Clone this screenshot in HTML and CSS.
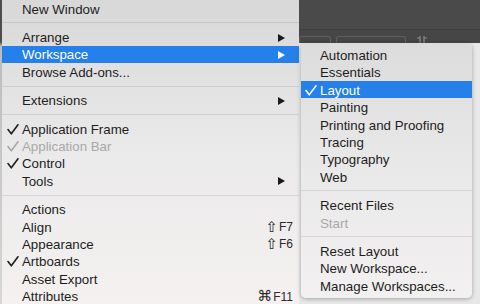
FILE: index.html
```html
<!DOCTYPE html>
<html lang="en">
<head>
    <meta charset="UTF-8">
    <title>Window Menu</title>
    <link rel="stylesheet" href="styles.css">
</head>
<body>
    <div class="screen">
        <div class="edge"></div>

        <!-- Window menu -->
        <div class="menu main">
            <div class="item"><span class="mark"></span><span>New Window</span></div>
            <div class="sep"></div>
            <div class="item"><span class="mark"></span><span>Arrange</span><span class="arrow"></span></div>
            <div class="item active"><span class="mark"></span><span>Workspace</span><span class="arrow"></span></div>
            <div class="item"><span class="mark"></span><span>Browse Add-ons...</span></div>
            <div class="sep"></div>
            <div class="item"><span class="mark"></span><span>Extensions</span><span class="arrow"></span></div>
            <div class="sep"></div>
            <div class="item"><span class="mark"><svg viewBox="0 0 12 11" width="12" height="11"><polyline points="1,5.6 4.3,9.8 11,0.8"/></svg></span><span>Application Frame</span></div>
            <div class="item disabled"><span class="mark"><svg viewBox="0 0 12 11" width="12" height="11"><polyline points="1,5.6 4.3,9.8 11,0.8"/></svg></span><span>Application Bar</span></div>
            <div class="item"><span class="mark"><svg viewBox="0 0 12 11" width="12" height="11"><polyline points="1,5.6 4.3,9.8 11,0.8"/></svg></span><span>Control</span></div>
            <div class="item"><span class="mark"></span><span>Tools</span><span class="arrow"></span></div>
            <div class="sep"></div>
            <div class="item"><span class="mark"></span><span>Actions</span></div>
            <div class="item"><span class="mark"></span><span>Align</span><span class="key"><span class="sym">⇧</span>F7</span></div>
            <div class="item"><span class="mark"></span><span>Appearance</span><span class="key"><span class="sym">⇧</span>F6</span></div>
            <div class="item"><span class="mark"><svg viewBox="0 0 12 11" width="12" height="11"><polyline points="1,5.6 4.3,9.8 11,0.8"/></svg></span><span>Artboards</span></div>
            <div class="item"><span class="mark"></span><span>Asset Export</span></div>
            <div class="item"><span class="mark"></span><span>Attributes</span><span class="key"><span class="sym">⌘</span>F11</span></div>
        </div>

        <div class="side">
            <div class="titlebar"></div>
            <div class="toolbar">
                <div class="field short"></div>
                <div class="field long"></div>
                <svg class="tool-icon" viewBox="0 0 12 9" width="12" height="9"><path d="M1 2h3V0M4 2v7M8 0v2h3M8 2v7"/></svg>
            </div>
            <div class="panel">
                <!-- Workspace submenu -->
                <div class="menu sub">
                    <div class="item"><span class="mark"></span><span>Automation</span></div>
                    <div class="item"><span class="mark"></span><span>Essentials</span></div>
                    <div class="item active"><span class="mark"><svg viewBox="0 0 12 11" width="12" height="11"><polyline points="1,5.6 4.3,9.8 11,0.8"/></svg></span><span>Layout</span></div>
                    <div class="item"><span class="mark"></span><span>Painting</span></div>
                    <div class="item"><span class="mark"></span><span>Printing and Proofing</span></div>
                    <div class="item"><span class="mark"></span><span>Tracing</span></div>
                    <div class="item"><span class="mark"></span><span>Typography</span></div>
                    <div class="item"><span class="mark"></span><span>Web</span></div>
                    <div class="sep"></div>
                    <div class="item"><span class="mark"></span><span>Recent Files</span></div>
                    <div class="item disabled"><span class="mark"></span><span>Start</span></div>
                    <div class="sep"></div>
                    <div class="item"><span class="mark"></span><span>Reset Layout</span></div>
                    <div class="item"><span class="mark"></span><span>New Workspace...</span></div>
                    <div class="item"><span class="mark"></span><span>Manage Workspaces...</span></div>
                </div>
            </div>
        </div>
    </div>
</body>
</html>
```

FILE: styles.css
```css
body {
    margin: 0;
    background-color: #e8e7e7;
    font-family: "Liberation Sans", Arial, sans-serif;
}
.screen {
    display: flex;
    width: 480px;
    height: 304px;
    overflow: hidden;
}
.edge {
    width: 2px;
    flex: none;
    background: linear-gradient(#4e4e4e 0, #4e4e4e 42px, #bdbdbd 46px, #d8d8d8 100%);
}
.menu {
    flex: none;
    color: #1d1d1d;
    font-size: 13.3px;
}
.main {
    width: 297px;
    background: linear-gradient(#d9d8d9 0%, #ebeaea 50%, #f4f1f0 100%);
    box-shadow: 1px 0 2px rgba(0, 0, 0, 0.18);
}
.item {
    display: flex;
    align-items: center;
    height: 17.4px;
    padding-top: 1px;
    box-sizing: border-box;
    padding-right: 6px;
    white-space: nowrap;
}
.mark {
    width: 20px;
    flex: none;
    display: flex;
    align-items: center;
}
.mark svg {
    margin-left: 5px;
    fill: none;
    stroke: currentColor;
    stroke-width: 1.6;
    stroke-linecap: round;
    stroke-linejoin: round;
}
.arrow {
    margin-left: auto;
    margin-right: 8px;
    width: 0;
    height: 0;
    border-left: 7px solid #1a1a1a;
    border-top: 4.5px solid transparent;
    border-bottom: 4.5px solid transparent;
}
.key {
    margin-left: auto;
    display: flex;
    align-items: center;
    font-size: 12px;
    color: #2a2a2a;
}
.sym {
    font-family: "DejaVu Sans", sans-serif;
    font-size: 15px;
    line-height: 1;
    margin-right: 1px;
}
.active {
    background-color: #2680ea;
    color: white;
}
.active .arrow {
    border-left-color: white;
}
.disabled {
    color: #a9a8a8;
}
.sep {
    height: 11px;
    display: flex;
    align-items: center;
}
.sep::after {
    content: "";
    flex: 1;
    height: 1px;
    background-color: rgba(0, 0, 0, 0.09);
}
.side {
    flex: 1;
    display: flex;
    flex-direction: column;
}
.titlebar {
    height: 29px;
    flex: none;
    background-color: #4a4a4a;
    border-bottom: 1px solid #3e3e3e;
}
.toolbar {
    height: 13px;
    flex: none;
    display: flex;
    align-items: flex-start;
    padding-top: 6px;
    box-sizing: border-box;
    background-color: #464646;
}
.field {
    height: 10px;
    border: 1px solid #5f5f5f;
    border-bottom: none;
    border-radius: 3px 3px 0 0;
}
.short {
    width: 30px;
}
.long {
    width: 68px;
    margin-left: 5px;
}
.tool-icon {
    margin-left: 10px;
    fill: none;
    stroke: #8a8a8a;
    stroke-width: 1.2;
}
.panel {
    flex: 1;
    display: flex;
    background-color: #e9e8e8;
}
.sub {
    width: 171px;
    height: 255px;
    margin-left: 2px;
    padding-top: 3.3px;
    box-sizing: border-box;
    border-radius: 5px;
    background: linear-gradient(#dddcdd 0%, #eae9e9 50%, #f2f0f0 100%);
    box-shadow: 0 1px 4px rgba(0, 0, 0, 0.3);
    overflow: hidden;
}
.sub .mark {
    width: 19px;
}
.sub .mark svg {
    margin-left: 4px;
}
```
